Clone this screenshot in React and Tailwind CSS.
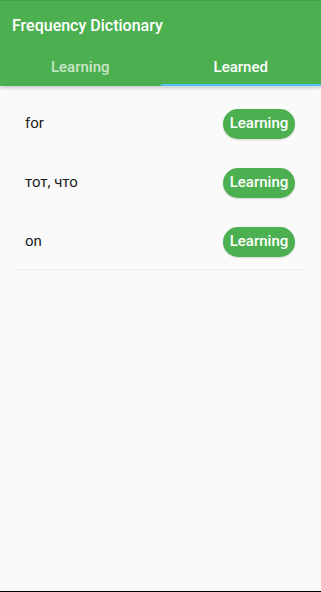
import React, { useState } from 'react'

const words = ['for', 'тот, что', 'on']

export default function App() {
  const [tab, setTab] = useState(1)

  return (
    <div className="h-[592px] w-[321px] bg-[#fafafa] flex flex-col font-['Roboto',sans-serif] border-b border-black">
      {/* Шапка */}
      <div className="bg-[#4caf50] shadow-[0_2px_4px_rgba(0,0,0,0.2)] border-t border-[#43a047] z-10">
        <div className="h-[49px] flex items-center px-3 text-white text-[16px] font-medium">
          Frequency Dictionary
        </div>
        <div className="flex h-[36px]">
          {['Learning', 'Learned'].map((label, i) => (
            <button
              key={label}
              onClick={() => setTab(i)}
              className={
                'flex-1 flex flex-col text-[15px] font-medium ' +
                (tab === i ? 'text-white' : 'text-white/70')
              }
            >
              <span className="flex-1 flex items-center justify-center pt-[1px]">{label}</span>
              <span className={'h-[2px] w-full ' + (tab === i ? 'bg-[#4fc3f7]' : 'bg-transparent')} />
            </button>
          ))}
        </div>
      </div>

      {/* Список */}
      <div className="pt-[8px] px-4">
        {words.map((w) => (
          <div key={w} className="h-[59px] flex items-center justify-between pl-[9px] pr-[10px]">
            <span className="text-[15px] text-[#1a1a1a]">{w}</span>
            <button className="h-[30px] w-[72px] rounded-full bg-[#4caf50] text-white text-[15px] font-medium shadow-[0_1px_2px_rgba(0,0,0,0.15)]">
              Learning
            </button>
          </div>
        ))}
        <div className="h-px bg-[#ececec] -mt-[2px]" />
      </div>
    </div>
  )
}
